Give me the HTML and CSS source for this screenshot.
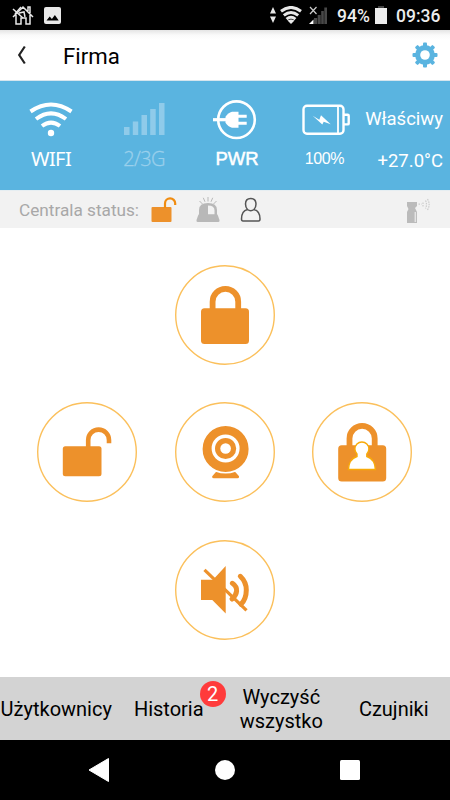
FILE: index.html
```html
<!DOCTYPE html>
<html lang="pl">
<head>
    <meta charset="UTF-8">
    <meta name="viewport" content="width=device-width, initial-scale=1.0">
    <title>Firma</title>
    <link rel="stylesheet" href="styles.css">
</head>
<body>
    <div class="statusbar">
        <svg class="sb-house" width="22" height="20" viewBox="0 0 22 20" fill="none" stroke="#e8e8e8" stroke-width="1.5">
            <path d="M1 12L11 2l10 10M4 10v9h5v-6h5v6h4v-9M16 6V2h2v6"/>
            <path d="M1 4l10 9M9 2L3 9M7 8l5-1 1 5"/>
        </svg>
        <svg class="sb-image" width="17" height="17" viewBox="0 0 17 17">
            <rect width="17" height="17" rx="2" fill="#e8e8e8"/>
            <path d="M2.5 13.5l3.2-4 2.2 2.5 3-4 3.8 5.5z" fill="#000"/>
        </svg>
        <svg class="sb-arrows" width="6" height="16" viewBox="0 0 6 16" fill="#e8e8e8">
            <path d="M3 0l3 6.5H0zM3 16l3-6.5H0z"/>
        </svg>
        <svg class="sb-wifi" width="22" height="18" viewBox="0 0 22 18" fill="none" stroke="#e8e8e8" stroke-width="3">
            <path d="M1 5.3Q11-2.4 21 5.3M3.8 9.4Q11 3.6 18.2 9.4M6.6 13.2Q11 9.4 15.4 13.2"/>
            <path d="M7.5 14.6Q11 12.4 14.500 14.6L11 18z" fill="#e8e8e8" stroke="none"/>
        </svg>
        <svg class="sb-signal" width="18" height="18" viewBox="0 0 18 18">
            <path d="M5 12h3.200v6H5zM8.700 9h3v9h-3zM12.200 5h2.600v13h-2.600zM15.300 1.500h2.700V18h-2.700z" fill="#484848"/>
            <path d="M0 18l4.500-4.500V18z" fill="#fff"/>
            <path d="M1 1l6.500 7M7.500 1L1 8" stroke="#ccc" stroke-width="1.2"/>
        </svg>
        <span class="sb-percent">94%</span>
        <svg class="sb-battery" width="12" height="18" viewBox="0 0 12 18">
            <path d="M3 0h6v2H3z" fill="#444"/>
            <path d="M0 2h12v16H0z" fill="#ececec"/>
        </svg>
        <span class="sb-time">09:36</span>
    </div>

    <div class="titlebar">
        <svg class="back" width="10" height="20" viewBox="0 0 10 20" fill="none" stroke="#222" stroke-width="2.2">
            <path d="M8.800 1.500L3.200 10l5.600 8.500"/>
        </svg>
        <h1>Firma</h1>
        <svg class="gear" width="26" height="26" viewBox="-13 -13 26 26" fill="#5ab4e0">
            <g id="teeth">
                <rect x="-2" y="-12.5" width="4" height="25" rx="1"/>
                <rect x="-12.5" y="-2" width="25" height="4" rx="1"/>
            </g>
            <use href="#teeth" transform="rotate(45)"/>
            <circle r="7.3" fill="none" stroke="#5ab4e0" stroke-width="5.2"/>
            <circle r="4.8" fill="#fff"/>
        </svg>
    </div>

    <div class="panel">
        <div class="cell">
            <svg width="44" height="36" viewBox="0 0 44 36" fill="none" stroke="#fff" stroke-width="4">
                <path d="M1.500 9.500Q22-4.500 42.500 9.500M7 17Q22 5.800 37 17M13 24Q22 17.200 31 24"/>
                <circle cx="22" cy="31" r="3.200" fill="#fff" stroke="none"/>
            </svg>
            <span class="wifi-label">WIFI</span>
        </div>
        <div class="cell">
            <svg width="42" height="36" viewBox="0 0 42 36" fill="#8fcbea">
                <path d="M1 25h5.500v8H1zM9.800 19.500h5.400v13.500H9.800zM18.500 13H24v20h-5.500zM27.200 7h5.500v26h-5.500zM36 1h5.500v32H36z"/>
            </svg>
            <span class="gsm-label">2/3G</span>
        </div>
        <div class="cell">
            <svg width="50" height="42" viewBox="0 -2 50 42" fill="none" stroke="#fff" stroke-width="2.6">
                <circle cx="24.500" cy="18.700" r="18.300"/>
                <path d="M1 18.700h13" stroke-width="3.200"/>
                <path d="M26.500 10.700h-6.500q-4 1-6.500 5v6q2.500 4 6.500 5h6.500z" fill="#fff" stroke="none"/>
                <path d="M26 15.200h8.700M26 22.300h8.700" stroke-width="3"/>
            </svg>
            <span class="pwr-label">PWR</span>
        </div>
        <div class="cell">
            <svg width="48" height="32" viewBox="0 0 48 32" fill="none" stroke="#fff" stroke-width="2.4">
                <rect x="1.500" y="1.700" width="40" height="28" rx="3.500"/>
                <path d="M36 2v27.500" stroke-width="1.800"/>
                <path d="M42 10.800h3.700q1 0 1 1v7.600q0 1-1 1H42"/>
                <path d="M10.700 11.700l6.600 4L19 11.300l9.700 9-7-2.600-1.400 2.800z" fill="#fff" stroke="none"/>
            </svg>
            <span class="battery-label">100%</span>
        </div>
        <div class="readings">
            <span>Właściwy</span>
            <span>+27.0°C</span>
        </div>
    </div>

    <div class="central">
        <span class="central-label">Centrala status:</span>
        <svg class="c-lock" width="26" height="26" viewBox="0 0 26 26">
            <rect x="0.500" y="10" width="20" height="15" rx="1" fill="#ed912b"/>
            <path d="M14 11V6.500a5 5 0 0 1 10.200 0V8" fill="none" stroke="#f08c10" stroke-width="2.2"/>
        </svg>
        <svg class="c-siren" width="24" height="26" viewBox="0 0 24 26">
            <path d="M3 20v-7q0-7 9-7t9 7v7z" fill="#b8b8b8"/>
            <path d="M12 17.500V8.500q6.500 0 6.500 5v4z" fill="#f2f2f2"/>
            <path d="M2.500 17.500h19l2 5.500q.3 2-1 2h-21q-1.300 0-1-2z" fill="#b8b8b8"/>
            <path d="M12 0v4.500M7.300.8l1.700 4M16.700.8l-1.700 4M3.500 4l3 3M20.500 4l-3 3" stroke="#b8b8b8"/>
        </svg>
        <svg class="c-user" width="22" height="26" viewBox="0 0 22 26" fill="none" stroke="#555" stroke-width="1.5" stroke-linejoin="round">
            <path d="M7.500 12.500Q5.500 10.500 5.500 7q0-5.500 5.200-5.500T16 7q0 3.500-2 5.500 6 1.500 6 9.500 0 2-1.500 2H3q-1.500 0-1.500-2 0-8 6-9.500 3.200 2.300 6.500 0"/>
        </svg>
        <svg class="c-sensor" width="24" height="26" viewBox="0 0 24 26">
            <path d="M1 4h10v4l-2 2 2 4v11H1V14l1.500-3L1 8z" fill="#bbb"/>
            <path d="M9.300 14v10" fill="none" stroke="#e4e4e4" stroke-width="1.500"/>
            <path d="M12.500 6.200h3M17 4.500v4M19.500 2.500q2 4 0 8M21.500 1q3.300 5.500 0 11" fill="none" stroke="#ccc" stroke-width="1.2" stroke-dasharray="1.5 1"/>
        </svg>
    </div>

    <div class="controls">
        <button class="control arm">
            <svg width="100" height="100" viewBox="0 0 100 100">
                <circle class="ring" cx="50" cy="50" r="49.3"/>
                <rect x="26" y="43.200" width="48" height="35.800" rx="3.500"/>
                <path class="line" d="M37.600 45v-8.300a12.800 12.800 0 0 1 25.600 0V45" stroke-width="5.800"/>
            </svg>
        </button>
        <button class="control disarm">
            <svg width="100" height="100" viewBox="0 0 100 100">
                <circle class="ring" cx="50" cy="50" r="49.3"/>
                <rect x="25.800" y="44.200" width="38.700" height="30.100" rx="2.500"/>
                <path class="line" d="M51.200 46v-8a10.400 10.400 0 0 1 20.800 0v3.200" stroke-width="4.600"/>
            </svg>
        </button>
        <button class="control camera">
            <svg width="100" height="100" viewBox="0 0 100 100">
                <circle class="ring" cx="50" cy="50" r="49.3"/>
                <path d="M43 69.500h15.200q1.500 0 2.300.8l3.500 4v.7q0 1.300-1.500 1.300H38.700q-1.500 0-1.500-1.300v-.7l3.500-4q.8-.8 2.300-.8z"/>
                <circle class="lens" cx="50.600" cy="47" r="23.800"/>
                <circle class="lens-ring" cx="50.600" cy="46.500" r="12.300"/>
                <circle class="lens-dot" cx="50.600" cy="46.500" r="5.300"/>
            </svg>
        </button>
        <button class="control home">
            <svg width="100" height="100" viewBox="0 0 100 100">
                <circle class="ring" cx="50" cy="50" r="49.3"/>
                <rect x="26.200" y="43.200" width="48" height="36.300" rx="3.500"/>
                <path class="line" d="M37.500 45v-8.500a12.600 12.600 0 0 1 25.200 0V45" stroke-width="5.800"/>
                <path class="person" d="M45 52a7 7 0 1 1 9.800 0v2.500q8.200 2.500 8.600 13H36.400q.400-10.500 8.600-13z"/>
            </svg>
        </button>
        <button class="control mute">
            <svg width="100" height="100" viewBox="0 0 100 100">
                <circle class="ring" cx="50" cy="50" r="49.3"/>
                <path class="line" d="M29.500 29.800l42 40.600" stroke-width="3.200"/>
                <path d="M26 39.700h12L50.700 26v47.400L37.300 60H26z"/>
                <path class="line" d="M57.400 43.300q4.600 3.200 4.200 7.700t-4.600 8" stroke-width="5" stroke-linecap="round"/>
                <path class="line" d="M65.300 36.300q6 5.700 6 13.700 0 9-5.300 14.300" stroke-width="5" stroke-linecap="round"/>
            </svg>
        </button>
    </div>

    <div class="tabs">
        <div class="tab">Użytkownicy</div>
        <div class="tab">Historia<span class="badge">2</span></div>
        <div class="tab">Wyczyść wszystko</div>
        <div class="tab">Czujniki</div>
    </div>

    <div class="navbar">
        <svg width="22" height="26" viewBox="0 0 22 26"><path d="M20.500 1.500v23L1 13z" fill="#fff" stroke="#fff" stroke-linejoin="round"/></svg>
        <svg width="20" height="20" viewBox="0 0 20 20"><circle cx="10" cy="10" r="10" fill="#fff"/></svg>
        <svg width="20" height="20" viewBox="0 0 20 20"><rect width="20" height="20" rx="1.5" fill="#fff"/></svg>
    </div>
</body>
</html>
```
FILE: styles.css
```css
* {
    box-sizing: border-box;
}
body {
    font-family: Roboto, sans-serif;
    background-color: #fff;
    color: #000;
    margin: 0;
    width: 450px;
    height: 800px;
    overflow: hidden;
}
svg {
    display: block;
    flex: none;
}
.statusbar {
    display: flex;
    align-items: center;
    height: 30px;
    padding: 0 10px 0 12px;
    background-color: #000;
    color: #ececec;
    font-size: 17.5px;
    font-weight: 500;
    white-space: nowrap;
}
.sb-image {
    margin-left: 10px;
}
.sb-arrows {
    margin-left: auto;
}
.sb-wifi {
    margin-left: 4px;
}
.sb-signal {
    margin-left: 7px;
}
.sb-percent {
    width: 33px;
    margin: 2px 0 0 10px;
}
.sb-battery {
    margin-left: 5px;
}
.sb-time {
    width: 44px;
    margin: 2px 0 0 9px;
}
.titlebar {
    display: flex;
    align-items: center;
    height: 51px;
    padding: 0 12px 1px 16px;
    background: linear-gradient(#e4e4e4, #fafafa 5px, #fff 10px);
    border-bottom: 1px solid #d5e5ee;
}
.titlebar h1 {
    margin: 2px auto 0 37px;
    font-size: 22.2px;
    font-weight: 400;
}
.panel {
    display: grid;
    grid-template-columns: 102px 84px 102px 72px 90px;
    height: 109px;
    background-color: #5ab4e0;
    color: #fff;
}
.cell {
    display: flex;
    flex-direction: column;
    align-items: center;
    justify-content: space-between;
    padding: 21px 0 19px;
}
.cell span {
    line-height: 24px;
}
.cell:nth-child(3) {
    padding-top: 18px;
}
.cell:nth-child(4) {
    padding: 23px 0 19px 4px;
}
.wifi-label {
    font-family: "Noto Sans", sans-serif;
    font-size: 20px;
    letter-spacing: -0.6px;
}
.gsm-label {
    font-family: "Open Sans", sans-serif;
    font-size: 20px;
    font-weight: 300;
    letter-spacing: -0.7px;
    color: #9ad0ec;
    -webkit-text-stroke: 0.3px #9ad0ec;
}
.pwr-label {
    font-family: "Liberation Sans", sans-serif;
    font-size: 18.5px;
    -webkit-text-stroke: 0.5px #fff;
}
.battery-label {
    margin-right: 3px;
    font-family: "Liberation Sans", sans-serif;
    font-size: 16px;
    letter-spacing: -0.4px;
}
.readings {
    display: flex;
    flex-direction: column;
    align-items: flex-end;
    gap: 18px;
    padding: 26px 7px 0 0;
    font-size: 18.5px;
    line-height: 24px;
    white-space: nowrap;
}
.central {
    display: flex;
    align-items: center;
    height: 38px;
    padding: 0 20px 0 19px;
    background-color: #f2f2f2;
    border-top: 1px solid #e6eef2;
}
.central-label {
    width: 120px;
    padding-top: 1px;
    font-size: 17.2px;
    color: #a8a8a8;
    white-space: nowrap;
}
.c-lock {
    margin-left: 12px;
}
.c-siren {
    margin-left: 19px;
}
.c-user {
    margin-left: 20px;
}
.c-sensor {
    margin: 2px 0 0 auto;
}
.controls {
    display: grid;
    grid-template-columns: repeat(3, 100px);
    grid-template-rows: 100px 100px 100px;
    grid-template-areas: ". arm ." "disarm camera home" ". mute .";
    gap: 37.5px;
    height: 449px;
    padding: 37px 37.5px 0;
}
.control {
    padding: 0;
    border: none;
    background: none;
    fill: #ed912b;
    cursor: pointer;
}
.arm {
    grid-area: arm;
}
.disarm {
    grid-area: disarm;
    margin: -0.5px 0 0 -0.5px;
}
.camera {
    grid-area: camera;
    margin-top: -0.5px;
}
.home {
    grid-area: home;
    margin: -0.5px 0 0 -0.5px;
}
.mute {
    grid-area: mute;
}
.ring {
    fill: none;
    stroke: #fbc05c;
    stroke-width: 1.4;
}
.line {
    fill: none;
    stroke: #ed912b;
}
.lens {
    stroke: #fff;
    stroke-width: 1.6;
}
.lens-ring {
    fill: none;
    stroke: #fff;
    stroke-width: 3.4;
}
.lens-dot {
    fill: #fff;
}
.person {
    fill: #fff;
    stroke: #f8aa08;
    stroke-width: 1.4;
}
.tabs {
    display: grid;
    grid-template-columns: repeat(4, 112.5px);
    align-items: center;
    height: 63px;
    background-color: #d3d3d3;
    font-size: 20px;
    line-height: 24px;
    text-align: center;
}
.tab {
    position: relative;
}
.badge {
    position: absolute;
    top: -16px;
    left: 87px;
    width: 26px;
    height: 26px;
    border-radius: 50%;
    background-color: #ff3b3b;
    color: #fff;
    line-height: 26px;
}
.navbar {
    display: flex;
    align-items: center;
    justify-content: space-between;
    height: 60px;
    padding: 0 90px 0 88px;
    background-color: #000;
}
```
